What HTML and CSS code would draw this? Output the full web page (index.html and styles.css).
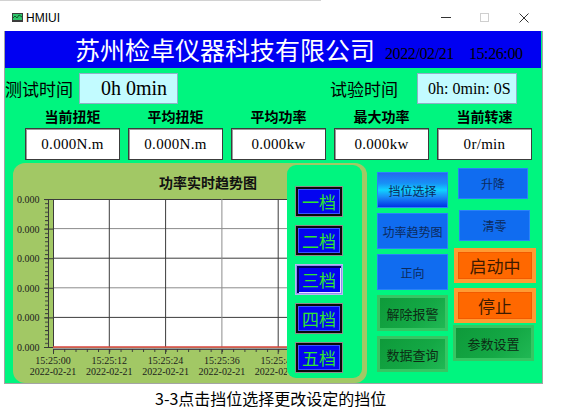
FILE: index.html
```html
<!DOCTYPE html>
<html lang="zh-CN">
<head>
<meta charset="utf-8">
<title>HMIUI</title>
<link rel="stylesheet" href="styles.css">
</head>
<body>
<div class="topline"></div>
<div class="titlebar">
  <svg class="app-icon" width="11" height="9" viewBox="0 0 11 9">
    <rect x="0" y="0" width="11" height="9" fill="#3c3c3c"/>
    <rect x="1" y="1" width="9" height="6" fill="#2fc46a"/>
    <path d="M1 5 L3 3 L5 5 L7 2 L10 4" stroke="#0d5a2a" stroke-width="1" fill="none"/>
  </svg>
  <span class="app-name">HMIUI</span>
  <div class="win-controls">
    <div class="wc"><span class="wc-min"></span></div>
    <div class="wc"><span class="wc-max"></span></div>
    <div class="wc">
      <svg width="10" height="10" viewBox="0 0 10 10"><path d="M0.5 0.5 L9.5 9.5 M9.5 0.5 L0.5 9.5" stroke="#333" stroke-width="1"/></svg>
    </div>
  </div>
</div>

<div class="frame">
  <div class="header">
    <span class="company">苏州检卓仪器科技有限公司</span>
    <span class="clock"><span>2022/02/21</span><span class="clock-time">15:26:00</span></span>
  </div>

  <div class="row-time">
    <span class="rt-label">测试时间</span>
    <div class="rt-box rt-box-test">0h 0min</div>
    <span class="rt-label rt-label-2">试验时间</span>
    <div class="rt-box rt-box-exp">0h: 0min: 0S</div>
  </div>

  <div class="labels">
    <span>当前扭矩</span><span>平均扭矩</span><span>平均功率</span><span>最大功率</span><span>当前转速</span>
  </div>
  <div class="values">
    <div class="val">0.000N.m</div>
    <div class="val">0.000N.m</div>
    <div class="val">0.000kw</div>
    <div class="val">0.000kw</div>
    <div class="val">0r/min</div>
  </div>

  <div class="main">
    <div class="chart-panel">
      <div class="chart">
        <svg class="trend" width="274" height="220" viewBox="0 0 274 220">
          <defs>
            <pattern id="ytick" x="0" y="36" width="8" height="4.2286" patternUnits="userSpaceOnUse">
              <rect x="0" y="0" width="8" height="1" fill="#3a3a3a"/>
            </pattern>
            <pattern id="xtick" x="40" y="0" width="11.26" height="8" patternUnits="userSpaceOnUse">
              <rect x="0" y="0" width="1" height="8" fill="#3a3a3a"/>
            </pattern>
          </defs>
          <text class="chart-title" x="195" y="25">功率实时趋势图</text>

          <text class="ax" x="4" y="40">0.000</text>
          <text class="ax" x="4" y="69.6">0.000</text>
          <text class="ax" x="4" y="99.2">0.000</text>
          <text class="ax" x="4" y="128.8">0.000</text>
          <text class="ax" x="4" y="158.4">0.000</text>
          <text class="ax" x="4" y="188">0.000</text>

          <rect x="32" y="36" width="4" height="149" fill="url(#ytick)"/>
          <line x1="35.5" y1="36" x2="35.5" y2="185" stroke="#3a3a3a"/>
          <path d="M31 36.5H40 M31 66.1H40 M31 95.7H40 M31 125.3H40 M31 154.9H40 M31 184.5H40" stroke="#3a3a3a"/>

          <rect x="40" y="36" width="240" height="148" fill="#ffffff"/>
          <path d="M40 65.6H274 M40 124.8H274" stroke="#8c8c8c"/>
          <path d="M40 36.5H274 M40 95.2H274 M40 154.4H274" stroke="#3c3c3c"/>
          <path d="M208.9 36V184" stroke="#8c8c8c"/>
          <path d="M40.5 36V184 M96.3 36V184 M152.6 36V184 M265.2 36V184" stroke="#3c3c3c"/>
          <line x1="40" y1="184" x2="274" y2="184" stroke="#d84040" stroke-width="1.4"/>
          <line x1="40" y1="185.5" x2="274" y2="185.5" stroke="#9a9a9a"/>

          <line x1="40" y1="186.5" x2="274" y2="186.5" stroke="#4a4a4a"/>
          <rect x="40" y="186" width="234" height="3" fill="url(#xtick)"/>
          <path d="M40.5 186V191 M96.3 186V191 M152.6 186V191 M208.9 186V191 M265.2 186V191" stroke="#3a3a3a"/>

          <text class="ax mid" x="40" y="201">15:25:00</text>
          <text class="ax mid" x="40" y="212">2022-02-21</text>
          <text class="ax mid" x="96.3" y="201">15:25:12</text>
          <text class="ax mid" x="96.3" y="212">2022-02-21</text>
          <text class="ax mid" x="152.6" y="201">15:25:24</text>
          <text class="ax mid" x="152.6" y="212">2022-02-21</text>
          <text class="ax mid" x="208.9" y="201">15:25:36</text>
          <text class="ax mid" x="208.9" y="212">2022-02-21</text>
          <text class="ax mid" x="265.2" y="201">15:25:48</text>
          <text class="ax mid" x="265.2" y="212">2022-02-21</text>
        </svg>
      </div>
      <div class="gears">
        <div class="gear">一档</div>
        <div class="gear">二档</div>
        <div class="gear sel">三档</div>
        <div class="gear">四档</div>
        <div class="gear">五档</div>
      </div>
    </div>

    <div class="ctrl-a">
      <div class="cb cb-grad">挡位选择</div>
      <div class="cb">功率趋势图</div>
      <div class="cb">正向</div>
      <div class="gb">解除报警</div>
      <div class="gb">数据查询</div>
    </div>

    <div class="ctrl-b">
      <div class="cb b-updown">升降</div>
      <div class="cb b-zero">清零</div>
      <div class="ob b-start">启动中</div>
      <div class="ob b-stop">停止</div>
      <div class="gb b-param">参数设置</div>
    </div>
  </div>
</div>

<div class="caption">3-3点击挡位选择更改设定的挡位</div>
</body>
</html>
```

FILE: styles.css
```css
* { box-sizing: border-box; }
html, body { margin: 0; padding: 0; }
body {
  width: 563px;
  height: 411px;
  overflow: hidden;
  background: #ffffff;
  font-family: "Liberation Serif", "Noto Sans CJK SC", serif;
  color: #000;
}

.topline { width: 321px; height: 1px; background: #d2d2d2; }

.titlebar {
  height: 29px;
  display: flex;
  align-items: center;
  padding-left: 12px;
}
.app-icon { margin-top: 4px; }
.app-name {
  font-family: "Liberation Sans", sans-serif;
  font-size: 12px;
  margin-left: 3px;
  margin-top: 4px;
}
.win-controls {
  margin-left: auto;
  margin-right: 20px;
  display: flex;
  height: 29px;
  padding-top: 4px;
}
.wc {
  width: 39px;
  display: flex;
  align-items: center;
  justify-content: center;
}
.wc-min { width: 10px; height: 1px; background: #333; }
.wc-max { width: 9px; height: 9px; border: 1px solid #cfcfcf; }

.frame {
  margin-left: 4px;
  width: 539px;
  background: #00f57f;
  border: 1px solid #a4a4a4;
  border-top: none;
}

.header {
  margin: 1px 1px 0 0;
  height: 37px;
  background: #0000f2;
  display: flex;
  align-items: center;
  padding-left: 70px;
}
.company {
  color: #ffffff;
  font-family: "Noto Sans CJK SC", sans-serif;
  font-size: 25px;
  line-height: 1;
}
.clock {
  margin-left: 10px;
  margin-top: 8px;
  font-size: 16px;
  letter-spacing: -0.4px;
  line-height: 1;
  color: #000;
}
.clock-time { margin-left: 15px; }

.row-time {
  display: flex;
  align-items: center;
  margin-top: 5px;
  height: 31px;
}
.rt-label {
  font-family: "Noto Sans CJK SC", sans-serif;
  font-size: 17px;
  line-height: 1;
}
.rt-label-2 { margin-left: 152px; }
.rt-box {
  height: 31px;
  background: #c2fbff;
  border: 1px solid #8fb0c6;
  display: flex;
  align-items: center;
}
.rt-box-test {
  margin-left: 6px;
  width: 99px;
  padding-left: 21px;
  font-size: 20px;
}
.rt-box-exp {
  margin-left: 19px;
  width: 100px;
  padding-left: 10px;
  font-size: 16px;
}

.labels, .values {
  display: grid;
  grid-template-columns: repeat(5, 95px);
  column-gap: 8px;
  padding-left: 20px;
}
.labels {
  margin-top: 4px;
  height: 16px;
  line-height: 16px;
  font-family: "Noto Sans CJK SC", sans-serif;
  font-size: 14px;
  font-weight: bold;
  text-align: center;
}
.values { margin-top: 4px; }
.val {
  height: 32px;
  background: #ffffff;
  border: 1px solid #3c3c3c;
  box-shadow: inset 1px 1px 0 #9a9a9a;
  display: flex;
  align-items: center;
  justify-content: center;
  font-size: 15px;
  letter-spacing: 0.3px;
}

.main {
  display: flex;
  margin-top: 3px;
  height: 220px;
  padding-left: 8px;
}
.chart-panel {
  width: 354px;
  height: 220px;
  background: #a2c865;
  border-radius: 12px;
  display: flex;
  overflow: hidden;
}
.chart { width: 274px; height: 220px; overflow: hidden; }
.trend { display: block; }
.chart-title {
  font-family: "Noto Sans CJK SC", sans-serif;
  font-size: 14px;
  font-weight: bold;
  text-anchor: middle;
  fill: #111;
}
.ax {
  font-family: "Liberation Serif", serif;
  font-size: 10px;
  fill: #1c1c1c;
}
.ax.mid { text-anchor: middle; }

.gears {
  width: 75px;
  height: 213px;
  margin-top: 2px;
  background: #00f57f;
  border-radius: 9px;
  padding: 21px 0 0 8px;
  display: flex;
  flex-direction: column;
  gap: 8px;
}
.gear {
  width: 48px;
  height: 31px;
  background: #0404f0;
  border: 1px solid #8c8c8c;
  box-shadow: inset 0 0 0 2px #0a0a0a, inset 0 0 0 3px #3a58ff;
  color: #2ee62e;
  font-family: "Noto Sans CJK SC", sans-serif;
  font-size: 17px;
  display: flex;
  align-items: center;
  justify-content: center;
}
.gear.sel {
  border: 1px solid #b8b8f4;
  box-shadow: inset 0 0 0 1px #9090f0, inset 3px 3px 0 #000060, inset -2px -2px 0 #e8e8ff;
}

.ctrl-a {
  margin-left: 10px;
  width: 71px;
  padding-top: 9px;
  display: flex;
  flex-direction: column;
  gap: 5px;
}
.ctrl-a > div { height: 36px; }
.ctrl-b {
  margin-left: 6px;
  width: 82px;
  display: flex;
  flex-direction: column;
  align-items: flex-start;
}

.cb, .gb, .ob {
  display: flex;
  align-items: center;
  justify-content: center;
  font-family: "Noto Sans CJK SC", sans-serif;
}
.cb {
  background: #106cf0;
  border: 1px solid #2a82f8;
  color: #0c2a5c;
  font-size: 12px;
}
.cb-grad {
  background: linear-gradient(#2468f0 0%, #1890f6 30%, #10d2ff 50%, #1a8ef6 70%, #0032e6 100%);
}
.gb {
  background: linear-gradient(135deg, #0e9a3a 0%, #14a845 60%, #20b854 100%);
  border: 3px solid #36c663;
  color: #0c2c14;
  font-size: 13px;
}
.ob {
  background: #ff6800;
  border: 4px solid #ff9b32;
  box-shadow: inset 0 0 0 1px #f25a00;
  color: #3e1a00;
  font-size: 17px;
}

.b-updown { margin: 5px 0 0 4px; width: 70px; height: 31px; }
.b-zero { margin: 11px 0 0 5px; width: 71px; height: 31px; }
.b-start { margin-top: 7px; width: 82px; height: 35px; }
.b-stop { margin-top: 5px; width: 82px; height: 35px; }
.b-param { margin: 2px 0 0 -1px; width: 81px; height: 36px; }

.caption {
  margin-top: 4px;
  padding-left: 155px;
  height: 20px;
  line-height: 20px;
  font-family: "Noto Sans CJK SC", sans-serif;
  font-size: 16px;
  color: #000;
}
```
